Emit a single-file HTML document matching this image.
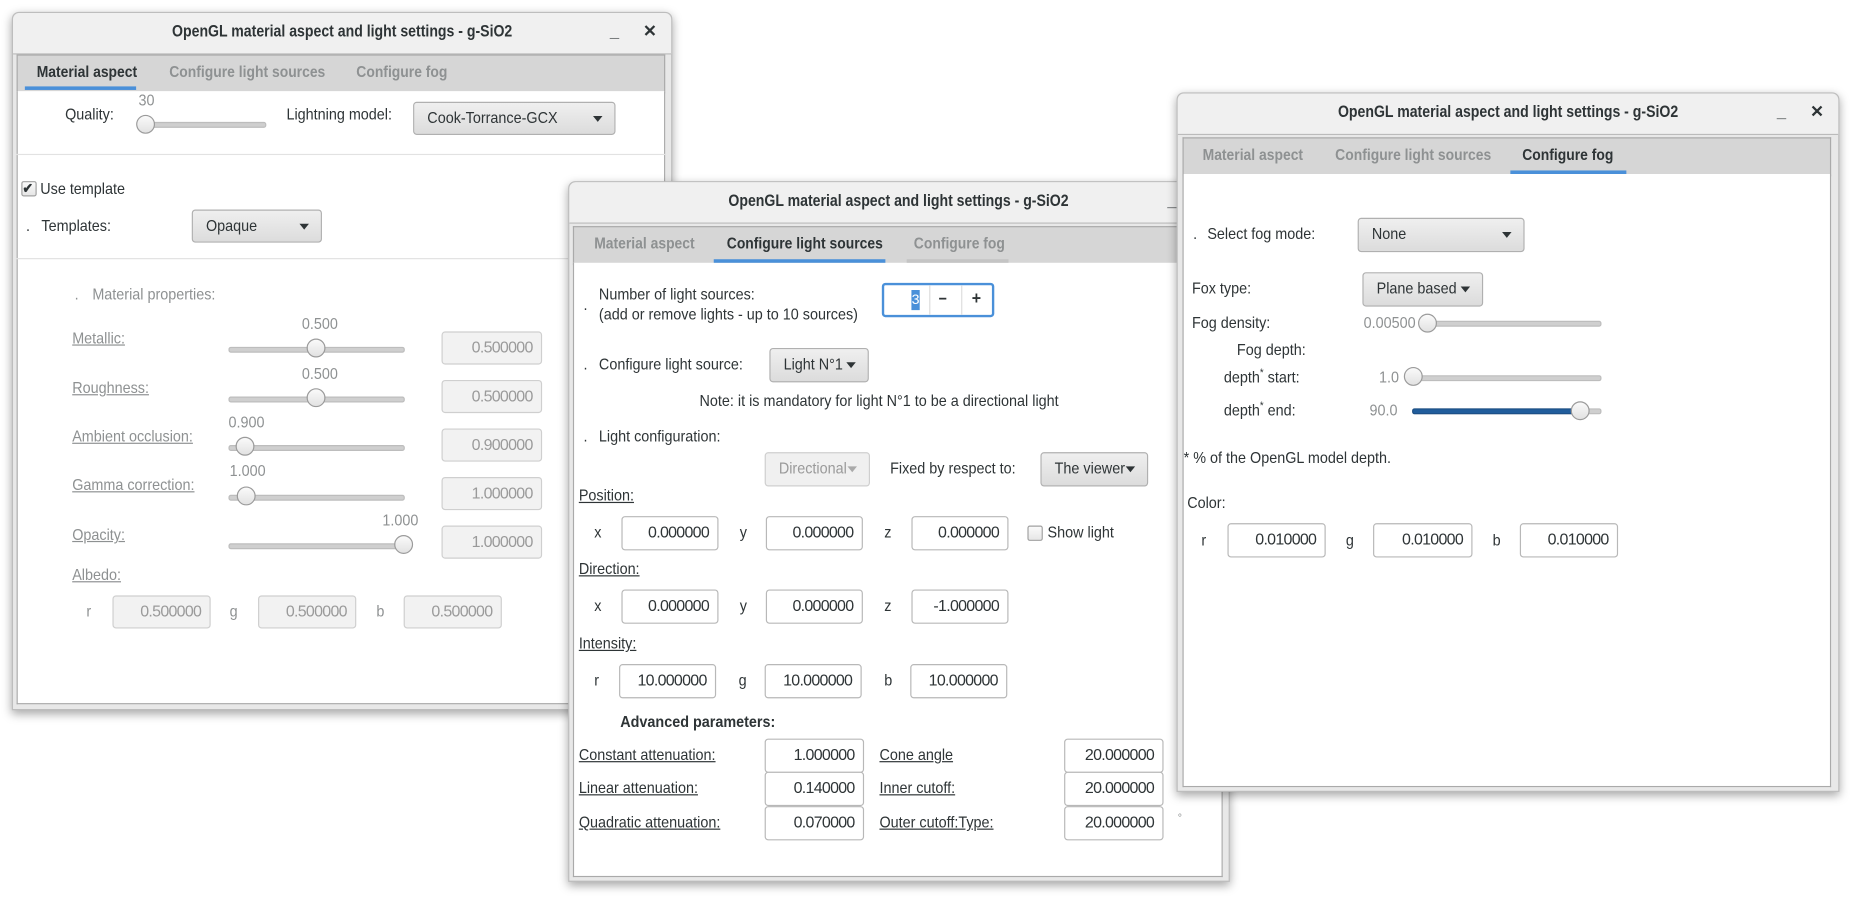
<!DOCTYPE html>
<html><head><meta charset="utf-8"><style>
html,body{margin:0;padding:0;background:#fff;width:1856px;height:899px;overflow:hidden}
#root{position:absolute;left:0;top:0;width:1568px;height:760px;transform:scale(1.18367);transform-origin:0 0;font-family:"Liberation Sans Narrow","Liberation Sans",sans-serif;font-size:13.5px;color:#2e3436}
.win{position:absolute;background:#e8e8e8;border:1px solid #bdbdbd;border-radius:6px 6px 0 0;box-shadow:0 3px 8px rgba(0,0,0,.35)}
.tb{position:absolute;left:0;right:0;top:0;height:34px;background:#f0f0f0;border-bottom:1px solid #b8b8b8;border-radius:6px 6px 0 0;text-align:center;line-height:30px;font-size:14px;font-weight:bold;color:#2e3436}
.tb b{display:inline-block;transform:scaleX(.85)}
.tb .min{position:absolute;right:44px;top:0;font-weight:bold}
.tb .cls{position:absolute;right:12px;top:0;font-weight:bold}
.tabs{position:absolute;background:#d6d6d6;border:1px solid #aaa;border-bottom:1px solid #b0b0b0}
.body{position:absolute;background:#fff;border:1px solid #aaa;border-top:none}
.t,.tab{position:absolute;white-space:nowrap;line-height:16px;transform:scaleX(.9);transform-origin:0 0}
.g{color:#8e9192}
.u{text-decoration:underline}
.tab{color:#8e9192;font-weight:bold;transform:scaleX(.87)}
.act{color:#2e3436;font-weight:bold}
.ul{position:absolute;height:3px;background:#4a90d9}
.e{position:absolute;background:#fff;border:1px solid #b8b8b8;border-radius:3px;box-sizing:border-box;text-align:right;padding-right:7px;line-height:26px;color:#2e3436;letter-spacing:-0.6px}
.e.d{background:#f2f2f2;color:#9a9a9a;border-color:#cfcfcf}
.c{position:absolute;background:linear-gradient(#efefef,#dcdcdc);border:1px solid #b0b0b0;border-radius:3px;box-sizing:border-box;line-height:26px;padding-left:11px;color:#2e3436}
.c span{display:inline-block;transform:scaleX(.9);transform-origin:0 0;white-space:nowrap}
.c.d{background:#f0f0f0;color:#9a9a9a;border-color:#cfcfcf}
.c i{position:absolute;right:10px;top:11px;width:0;height:0;border-left:4.5px solid transparent;border-right:4.5px solid transparent;border-top:5px solid #2e3436}
.c.d i{border-top-color:#aaa}
.tr{position:absolute;height:3px;background:#cfcfcf;border:1px solid #bdbdbd;border-radius:2px}
.k{position:absolute;width:16px;height:16px;border-radius:50%;background:linear-gradient(#fafafa,#e2e2e2);border:1px solid #9b9b9b;box-sizing:border-box}
.sep{position:absolute;height:1px;background:#e2e2e2}
.cb{position:absolute;width:13px;height:13px;border:1px solid #a0a0a0;border-radius:2px;background:linear-gradient(#fafafa,#e6e6e6);box-sizing:border-box}
</style></head><body><div id="root">

<!-- WINDOW 1 -->
<div class="win" style="left:10px;top:10px;width:556px;height:588px">
 <div class="tb"><b>OpenGL material aspect and light settings - g-SiO2</b><span class="min">_</span><span class="cls">✕</span></div>
 <div class="tabs" style="left:3px;top:35px;width:546px;height:31px"></div>
 <div class="body" style="left:3px;top:66px;width:546px;height:517px"></div>
</div>
<div class="tab act" style="left:31px;top:53px">Material aspect</div>
<div class="ul" style="left:21px;top:73px;width:94px"></div>
<div class="tab" style="left:143px;top:53px">Configure light sources</div>
<div class="tab" style="left:301px;top:53px">Configure fog</div>
<div class="t" style="left:55px;top:89px">Quality:</div>
<div class="t g" style="left:117px;top:77px">30</div>
<div class="tr" style="left:120px;top:103px;width:103px"></div>
<div class="k" style="left:115px;top:97px"></div>
<div class="t" style="left:242px;top:89px">Lightning model:</div>
<div class="c" style="left:349px;top:86px;width:171px;height:28px"><span>Cook-Torrance-GCX</span><i></i></div>
<div class="sep" style="left:14px;top:130px;width:548px"></div>
<div class="cb" style="left:18px;top:153px"></div>
<div class="t" style="left:19px;top:151px;font-size:12px;font-weight:bold">✔</div>
<div class="t" style="left:34px;top:152px">Use template</div>
<div class="t" style="left:22px;top:183px">.</div>
<div class="t" style="left:35px;top:183px">Templates:</div>
<div class="c" style="left:162px;top:177px;width:110px;height:28px"><span>Opaque</span><i></i></div>
<div class="sep" style="left:14px;top:218px;width:466px"></div>
<div class="t g" style="left:63px;top:241px">.</div>
<div class="t g" style="left:78px;top:241px">Material properties:</div>

<div class="t g u" style="left:61px;top:278px">Metallic:</div>
<div class="t g" style="left:255px;top:266px">0.500</div>
<div class="tr" style="left:193px;top:293px;width:147px"></div>
<div class="k" style="left:259px;top:286px"></div>
<div class="e d" style="left:373px;top:280px;width:85px;height:28px">0.500000</div>

<div class="t g u" style="left:61px;top:320px">Roughness:</div>
<div class="t g" style="left:255px;top:308px">0.500</div>
<div class="tr" style="left:193px;top:335px;width:147px"></div>
<div class="k" style="left:259px;top:328px"></div>
<div class="e d" style="left:373px;top:321px;width:85px;height:28px">0.500000</div>

<div class="t g u" style="left:61px;top:361px">Ambient occlusion:</div>
<div class="t g" style="left:193px;top:349px">0.900</div>
<div class="tr" style="left:193px;top:376px;width:147px"></div>
<div class="k" style="left:199px;top:369px"></div>
<div class="e d" style="left:373px;top:362px;width:85px;height:28px">0.900000</div>

<div class="t g u" style="left:61px;top:402px">Gamma correction:</div>
<div class="t g" style="left:194px;top:390px">1.000</div>
<div class="tr" style="left:193px;top:418px;width:147px"></div>
<div class="k" style="left:200px;top:411px"></div>
<div class="e d" style="left:373px;top:403px;width:85px;height:28px">1.000000</div>

<div class="t g u" style="left:61px;top:444px">Opacity:</div>
<div class="t g" style="left:323px;top:432px">1.000</div>
<div class="tr" style="left:193px;top:459px;width:147px"></div>
<div class="k" style="left:333px;top:452px"></div>
<div class="e d" style="left:373px;top:444px;width:85px;height:28px">1.000000</div>

<div class="t g u" style="left:61px;top:478px">Albedo:</div>
<div class="t g" style="left:73px;top:509px">r</div>
<div class="e d" style="left:95px;top:503px;width:83px;height:28px">0.500000</div>
<div class="t g" style="left:194px;top:509px">g</div>
<div class="e d" style="left:218px;top:503px;width:83px;height:28px">0.500000</div>
<div class="t g" style="left:318px;top:509px">b</div>
<div class="e d" style="left:341px;top:503px;width:83px;height:28px">0.500000</div>

<!-- WINDOW 2 -->
<div class="win" style="left:480px;top:153px;width:557px;height:590px">
 <div class="tb"><b>OpenGL material aspect and light settings - g-SiO2</b><span class="min">_</span><span class="cls">✕</span></div>
 <div class="tabs" style="left:3px;top:37px;width:547px;height:31px"></div>
 <div class="body" style="left:3px;top:68px;width:547px;height:518px"></div>
</div>
<div class="tab" style="left:502px;top:198px">Material aspect</div>
<div class="tab act" style="left:614px;top:198px">Configure light sources</div>
<div class="ul" style="left:603px;top:219px;width:145px"></div>
<div class="tab" style="left:772px;top:198px">Configure fog</div>
<div class="sep" style="left:766px;top:219px;width:86px;height:3px;background:#c4c4c4"></div>
<div class="t" style="left:493px;top:250px">.</div>
<div class="t" style="left:506px;top:241px">Number of light sources:</div>
<div class="t" style="left:506px;top:258px">(add or remove lights - up to 10 sources)</div>
<div style="position:absolute;left:745px;top:239px;width:95px;height:29px;border:2px solid #4a90d9;border-radius:3px;box-sizing:border-box;background:#fff"></div>
<div style="position:absolute;left:770px;top:245px;width:7px;height:17px;background:#4a90d9;color:#fff;line-height:17px;text-align:center;font-size:12px">3</div>
<div style="position:absolute;left:785px;top:241px;width:1px;height:25px;background:#ddd"></div>
<div style="position:absolute;left:812px;top:241px;width:1px;height:25px;background:#ddd"></div>
<div class="t" style="left:793px;top:245px;font-weight:bold">−</div>
<div class="t" style="left:821px;top:245px;font-weight:bold;font-size:15px">+</div>
<div class="t" style="left:493px;top:300px">.</div>
<div class="t" style="left:506px;top:300px">Configure light source:</div>
<div class="c" style="left:650px;top:294px;width:84px;height:29px"><span>Light N°1</span><i></i></div>
<div class="t" style="left:591px;top:331px">Note: it is mandatory for light N°1 to be a directional light</div>
<div class="t" style="left:493px;top:361px">.</div>
<div class="t" style="left:506px;top:361px">Light configuration:</div>
<div class="c d" style="left:646px;top:382px;width:89px;height:29px"><span>Directional</span><i></i></div>
<div class="t" style="left:752px;top:388px">Fixed by respect to:</div>
<div class="c" style="left:879px;top:382px;width:91px;height:29px"><span>The viewer</span><i></i></div>
<div class="t u" style="left:489px;top:411px">Position:</div>
<div class="t" style="left:502px;top:442px">x</div>
<div class="e" style="left:525px;top:436px;width:82px;height:29px">0.000000</div>
<div class="t" style="left:625px;top:442px">y</div>
<div class="e" style="left:647px;top:436px;width:82px;height:29px">0.000000</div>
<div class="t" style="left:747px;top:442px">z</div>
<div class="e" style="left:770px;top:436px;width:82px;height:29px">0.000000</div>
<div class="cb" style="left:868px;top:444px"></div>
<div class="t" style="left:885px;top:442px">Show light</div>
<div class="t u" style="left:489px;top:473px">Direction:</div>
<div class="t" style="left:502px;top:504px">x</div>
<div class="e" style="left:525px;top:498px;width:82px;height:29px">0.000000</div>
<div class="t" style="left:625px;top:504px">y</div>
<div class="e" style="left:647px;top:498px;width:82px;height:29px">0.000000</div>
<div class="t" style="left:747px;top:504px">z</div>
<div class="e" style="left:770px;top:498px;width:82px;height:29px">-1.000000</div>
<div class="t u" style="left:489px;top:536px">Intensity:</div>
<div class="t" style="left:502px;top:567px">r</div>
<div class="e" style="left:523px;top:561px;width:82px;height:29px">10.000000</div>
<div class="t" style="left:624px;top:567px">g</div>
<div class="e" style="left:646px;top:561px;width:82px;height:29px">10.000000</div>
<div class="t" style="left:747px;top:567px">b</div>
<div class="e" style="left:769px;top:561px;width:82px;height:29px">10.000000</div>
<div class="t" style="left:524px;top:602px;font-weight:bold">Advanced parameters:</div>
<div class="t u" style="left:489px;top:630px">Constant attenuation:</div>
<div class="e" style="left:646px;top:624px;width:84px;height:29px">1.000000</div>
<div class="t u" style="left:743px;top:630px">Cone angle</div>
<div class="e" style="left:899px;top:624px;width:84px;height:29px">20.000000</div>
<div class="t u" style="left:489px;top:658px">Linear attenuation:</div>
<div class="e" style="left:646px;top:652px;width:84px;height:29px">0.140000</div>
<div class="t u" style="left:743px;top:658px">Inner cutoff:</div>
<div class="e" style="left:899px;top:652px;width:84px;height:29px">20.000000</div>
<div class="t u" style="left:489px;top:687px">Quadratic attenuation:</div>
<div class="e" style="left:646px;top:681px;width:84px;height:29px">0.070000</div>
<div class="t u" style="left:743px;top:687px">Outer cutoff:Type:</div>
<div class="e" style="left:899px;top:681px;width:84px;height:29px">20.000000</div>
<div class="t g" style="left:995px;top:684px;font-size:10px">°</div>

<!-- WINDOW 3 -->
<div class="win" style="left:994px;top:78px;width:558px;height:589px">
 <div class="tb"><b>OpenGL material aspect and light settings - g-SiO2</b><span class="min">_</span><span class="cls">✕</span></div>
 <div class="tabs" style="left:4px;top:37px;width:546px;height:31px"></div>
 <div class="body" style="left:4px;top:68px;width:546px;height:517px"></div>
</div>
<div class="tab" style="left:1016px;top:123px">Material aspect</div>
<div class="tab" style="left:1128px;top:123px">Configure light sources</div>
<div class="tab act" style="left:1286px;top:123px">Configure fog</div>
<div class="ul" style="left:1276px;top:144px;width:98px"></div>
<div class="t" style="left:1008px;top:190px">.</div>
<div class="t" style="left:1020px;top:190px">Select fog mode:</div>
<div class="c" style="left:1147px;top:184px;width:141px;height:29px"><span>None</span><i></i></div>
<div class="t" style="left:1007px;top:236px">Fox type:</div>
<div class="c" style="left:1151px;top:230px;width:102px;height:29px"><span>Plane based</span><i></i></div>
<div class="t" style="left:1007px;top:265px">Fog density:</div>
<div class="t g" style="left:1152px;top:265px">0.00500</div>
<div class="tr" style="left:1200px;top:271px;width:151px"></div>
<div class="k" style="left:1198px;top:265px"></div>
<div class="t" style="left:1045px;top:288px">Fog depth:</div>
<div class="t" style="left:1034px;top:311px">depth<sup style="font-size:9px;line-height:0">*</sup> start:</div>
<div class="t g" style="left:1165px;top:311px">1.0</div>
<div class="tr" style="left:1188px;top:317px;width:163px"></div>
<div class="k" style="left:1186px;top:310px"></div>
<div class="t" style="left:1034px;top:339px">depth<sup style="font-size:9px;line-height:0">*</sup> end:</div>
<div class="t g" style="left:1157px;top:339px">90.0</div>
<div class="tr" style="left:1193px;top:345px;width:158px"></div>
<div style="position:absolute;left:1193px;top:345px;width:140px;height:5px;background:#215d9c;border-radius:2px;border:1px solid #1c4f85;box-sizing:border-box"></div>
<div class="k" style="left:1327px;top:339px"></div>
<div class="t" style="left:1000px;top:379px">* % of the OpenGL model depth.</div>
<div class="t" style="left:1003px;top:417px">Color:</div>
<div class="t" style="left:1015px;top:449px">r</div>
<div class="e" style="left:1037px;top:442px;width:83px;height:29px">0.010000</div>
<div class="t" style="left:1137px;top:449px">g</div>
<div class="e" style="left:1160px;top:442px;width:84px;height:29px">0.010000</div>
<div class="t" style="left:1261px;top:449px">b</div>
<div class="e" style="left:1284px;top:442px;width:83px;height:29px">0.010000</div>

</div></body></html>
